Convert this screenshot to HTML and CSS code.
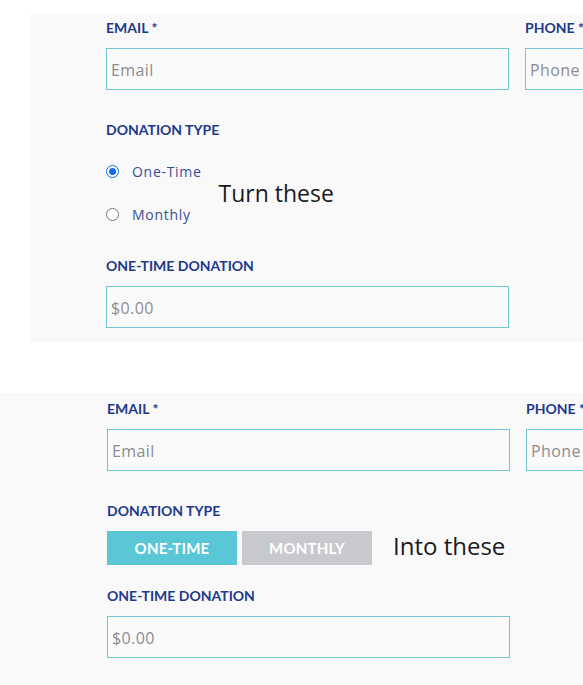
FILE: index.html
```html
<!DOCTYPE html>
<html lang="en">
<head>
<meta charset="utf-8">
<title>Donation form</title>
<link rel="stylesheet" href="styles.css">
</head>
<body>
<section class="panel panel-before">
  <div class="row">
    <div class="field field-email">
      <label class="label">EMAIL *</label>
      <div class="input"><span class="ph">Email</span></div>
    </div>
    <div class="field field-phone">
      <label class="label">PHONE *</label>
      <div class="input"><span class="ph">Phone</span></div>
    </div>
  </div>
  <div class="type-block">
    <div class="label">DONATION TYPE</div>
    <div class="radio-wrap">
      <div class="radios">
        <div class="radio-row"><span class="radio checked"></span><span class="radio-text">One-Time</span></div>
        <div class="radio-row"><span class="radio"></span><span class="radio-text">Monthly</span></div>
      </div>
      <div class="note note-turn">Turn these</div>
    </div>
  </div>
  <div class="field field-amount">
    <label class="label">ONE-TIME DONATION</label>
    <div class="input"><span class="ph">$0.00</span></div>
  </div>
</section>

<section class="panel panel-after">
  <div class="row">
    <div class="field field-email">
      <label class="label">EMAIL *</label>
      <div class="input"><span class="ph">Email</span></div>
    </div>
    <div class="field field-phone">
      <label class="label">PHONE *</label>
      <div class="input"><span class="ph">Phone</span></div>
    </div>
  </div>
  <div class="type-block2">
    <div class="label">DONATION TYPE</div>
    <div class="btn-row">
      <span class="btn btn-on">ONE-TIME</span>
      <span class="btn btn-off">MONTHLY</span>
      <span class="note note-into">Into these</span>
    </div>
  </div>
  <div class="field field-amount2">
    <label class="label">ONE-TIME DONATION</label>
    <div class="input"><span class="ph">$0.00</span></div>
  </div>
</section>
</body>
</html>
```

FILE: styles.css
```css
html, body {
  margin: 0;
  padding: 0;
  background: #ffffff;
  overflow: hidden;
}
body {
  width: 583px;
  height: 685px;
  font-family: Lato, "Open Sans", sans-serif;
}
.panel {
  background: #f9f9fa;
  box-sizing: border-box;
  overflow: hidden;
}
.panel-before {
  margin: 14px 0 0 30px;
  height: 328px;
  padding: 0 0 0 76px;
}
.panel-after {
  margin-top: 51px;
  height: 292px;
  padding: 0 0 0 107px;
}
.row {
  display: flex;
  gap: 16px;
  white-space: nowrap;
}
.panel-before .row { padding-top: 6px; }
.panel-after .row { padding-top: 8px; }
.field { display: flex; flex-direction: column; }
.field-email { width: 403px; flex: none; }
.field-phone { width: 100px; flex: none; }
.label {
  color: #22398a;
  font-weight: 700;
  font-size: 14px;
  line-height: 16px;
  height: 16px;
  display: block;
  white-space: nowrap;
}
.input {
  margin-top: 12px;
  height: 42px;
  box-sizing: border-box;
  border: 1px solid #72c5d2;
  background: #fafafb;
  display: flex;
  align-items: center;
  padding-left: 4px;
  overflow: hidden;
}
.ph {
  color: #8c8c90;
  font-family: "Open Sans", Lato, sans-serif;
  font-size: 16px;
  letter-spacing: 0.4px;
  padding-top: 1px;
}
.type-block { margin-top: 32px; }
.radio-wrap {
  display: flex;
  align-items: center;
}
.radios {
  display: flex;
  flex-direction: column;
  gap: 21px;
  margin-top: 22px;
}
.radio-row {
  display: flex;
  align-items: center;
  height: 22px;
}
.radio {
  width: 13px;
  height: 13px;
  border-radius: 50%;
  border: 1px solid #767676;
  background: #fff;
  box-sizing: border-box;
  display: inline-block;
  position: relative;
}
.radio.checked {
  border: 1px solid #0f6fe8;
}
.radio.checked::after {
  content: "";
  position: absolute;
  left: 2px;
  top: 2px;
  width: 7px;
  height: 7px;
  border-radius: 50%;
  background: #0f6fe8;
}
.radio-text {
  margin-left: 13px;
  color: #3a4f92;
  font-family: "Open Sans", Lato, sans-serif;
  font-size: 14px;
  letter-spacing: 0.7px;
}
.note {
  color: #1a1a1a;
  font-family: "Open Sans", sans-serif;
  font-size: 23px;
  white-space: nowrap;
}
.note-turn {
  margin-left: 17px;
  margin-top: 22px;
}
.field-amount { margin-top: 33px; width: 403px; }
.type-block2 { margin-top: 32px; }
.btn-row {
  display: flex;
  align-items: center;
  margin-top: 12px;
  gap: 5px;
  height: 34px;
}
.btn {
  width: 130px;
  height: 34px;
  display: flex;
  align-items: center;
  justify-content: center;
  color: #ffffff;
  font-weight: 700;
  font-size: 15px;
  letter-spacing: 0.2px;
}
.btn-on { background: #5ac7d6; }
.btn-off { background: #c8c9cc; }
.note-into { margin-left: 16px; font-size: 24px; line-height: 26px; margin-bottom: 5px; }
.field-amount2 { margin-top: 23px; width: 403px; }
```
